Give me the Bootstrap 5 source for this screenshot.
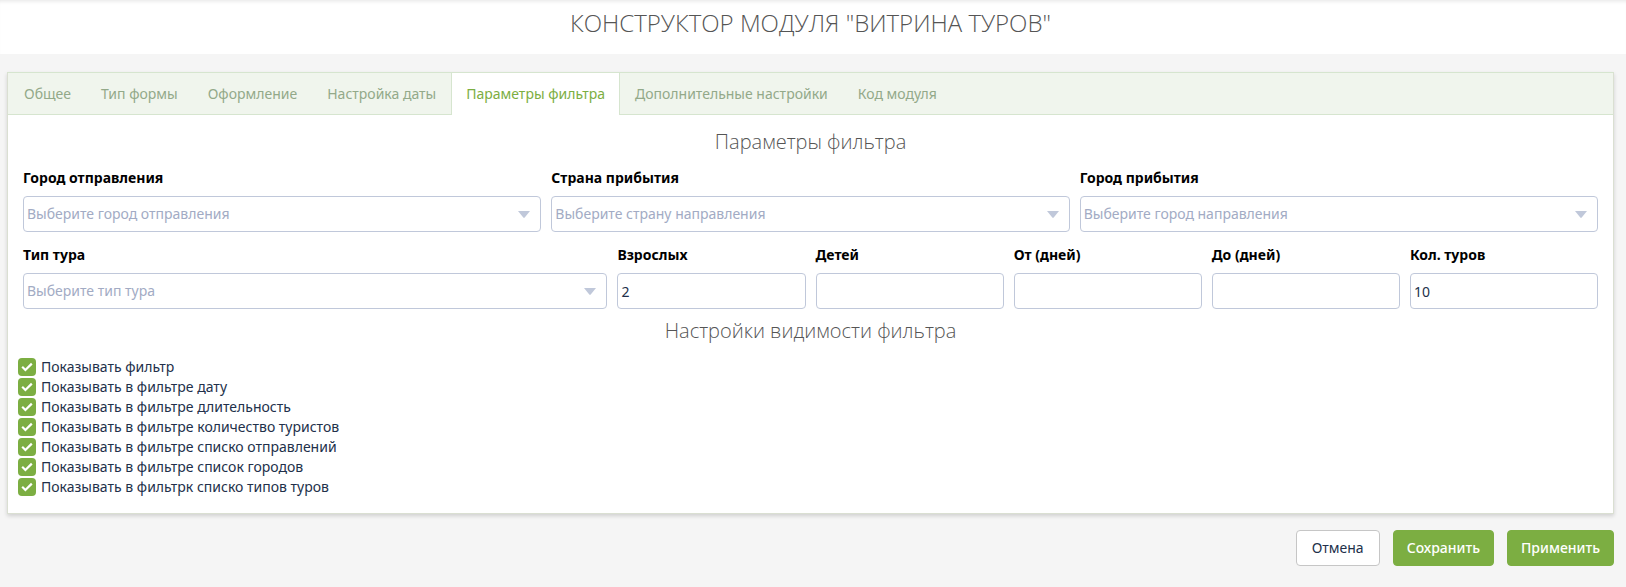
<!DOCTYPE html>
<html lang="ru">
<head>
<meta charset="utf-8">
<meta name="viewport" content="width=device-width, initial-scale=1">
<title>Конструктор модуля "Витрина туров"</title>
<link href="https://cdn.jsdelivr.net/npm/bootstrap@5.3.0/dist/css/bootstrap.min.css" rel="stylesheet">
<style>
  body { background: #f5f5f5; color: #22304a; font: 14px/20px "Noto Sans", "Open Sans", sans-serif; }
  .page-head { background: #fff; height: 54px; padding: 8px 12px 0 7px; box-shadow: inset 0 4px 4px -3px #e4e4e4; }
  .page-head h1 { font: 300 24px/30px "Open Sans", "Noto Sans", sans-serif; color: #555; }
  .page-main { padding: 18px 12px 0 7px; }
  .panel { background: #fff; border: 1px solid #dadfd2; border-top-color: #d6e5cf; box-shadow: 0 2px 4px rgba(0,0,0,.15); }
  .panel-tabs { background: #f0f5ed; border-bottom: 1px solid #d6e5cf; padding-left: 1px; }
  .panel-tabs .nav-link { color: #93a989; height: 41px; padding: 11px 14px; border: solid transparent; border-width: 0 1px; border-radius: 0; margin-bottom: -1px; }
  .panel-tabs .nav-link.active { color: #7cae42; background: #fff; height: 42px; border-color: #d6e5cf; }
  .panel-body { padding: 14px 10px 16px; }
  .panel-body h2 { font: 300 20px/26px "Open Sans", "Noto Sans", sans-serif; color: #555; margin: 0 0 13px; }
  .panel-body h2.lower { margin-top: 9px; }
  .fields { --bs-gutter-x: 10px; margin: 0; }
  .fields + .fields { margin-top: 13px; }
  .eighth { flex: 0 0 auto; width: 12.5%; }
  .three-eighths { flex: 0 0 auto; width: 37.5%; }
  .fields label { display: block; color: #000; font-weight: 700; margin-bottom: 8px; }
  .fields .form-control, .fields .form-select { height: 36px; padding: 0 3px; border: 1px solid #c0c8da; border-radius: 4px; font-size: 14px; line-height: 20px; color: #22304a; }
  .fields .form-select { color: #a2abc4; background-size: 12px 7px; background-position: right 10px center;
    background-image: url("data:image/svg+xml,%3Csvg xmlns='http://www.w3.org/2000/svg' viewBox='0 0 12 7'%3E%3Cpath d='M0 0h12L6.7 6.6a1 1 0 0 1-1.4 0z' fill='%23c0c8da'/%3E%3C/svg%3E"); }
  .visibility .form-check { display: flex; gap: 5px; min-height: 20px; margin: 0; padding: 0; }
  .visibility .form-check-input { flex: none; float: none; width: 18px; height: 18px; margin: 1px 0 0; border: 0; border-radius: 4px; }
  .visibility .form-check-input:checked { background-color: #7cae42; background-size: 18px 18px;
    background-image: url("data:image/svg+xml,%3Csvg xmlns='http://www.w3.org/2000/svg' viewBox='0 0 18 18'%3E%3Cpath d='M4.2 8.8l3.2 3.2 6.4-6.4' fill='none' stroke='%23fff' stroke-width='2.2'/%3E%3C/svg%3E"); }
  .actions { gap: 13px; }
  .actions .btn { font-size: 14px; line-height: 20px; height: 36px; padding: 7px 15px; border-radius: 4px; }
  .btn-plain { background: #fff; border-color: #c6c6c6; color: #22304a; }
  .actions .btn-green { background: #7cae42; border-color: #7cae42; color: #fff; font-weight: 500; padding: 7px 13px; }
</style>
</head>
<body>
<header class="page-head text-center"><h1 class="m-0">КОНСТРУКТОР МОДУЛЯ "ВИТРИНА ТУРОВ"</h1></header>
<main class="page-main">
  <section class="panel">
    <nav class="panel-tabs nav">
      <a class="nav-link" href="#">Общее</a>
      <a class="nav-link" href="#">Тип формы</a>
      <a class="nav-link" href="#">Оформление</a>
      <a class="nav-link" href="#">Настройка даты</a>
      <a class="nav-link active" aria-current="page" href="#">Параметры фильтра</a>
      <a class="nav-link" href="#">Дополнительные настройки</a>
      <a class="nav-link" href="#">Код модуля</a>
    </nav>
    <form class="panel-body" id="filter">
      <h2 class="text-center">Параметры фильтра</h2>
      <div class="fields row">
        <div class="col-4"><label for="from">Город отправления</label><select class="form-select" id="from"><option>Выберите город отправления</option></select></div>
        <div class="col-4"><label for="country">Страна прибытия</label><select class="form-select" id="country"><option>Выберите страну направления</option></select></div>
        <div class="col-4"><label for="to">Город прибытия</label><select class="form-select" id="to"><option>Выберите город направления</option></select></div>
      </div>
      <div class="fields row">
        <div class="three-eighths"><label for="type">Тип тура</label><select class="form-select" id="type"><option>Выберите тип тура</option></select></div>
        <div class="eighth"><label for="adults">Взрослых</label><input class="form-control" id="adults" value="2"></div>
        <div class="eighth"><label for="kids">Детей</label><input class="form-control" id="kids"></div>
        <div class="eighth"><label for="dmin">От (дней)</label><input class="form-control" id="dmin"></div>
        <div class="eighth"><label for="dmax">До (дней)</label><input class="form-control" id="dmax"></div>
        <div class="eighth"><label for="count">Кол. туров</label><input class="form-control" id="count" value="10"></div>
      </div>
      <h2 class="lower text-center">Настройки видимости фильтра</h2>
      <div class="visibility">
        <div class="form-check"><input class="form-check-input" type="checkbox" id="v1" checked><label for="v1">Показывать фильтр</label></div>
        <div class="form-check"><input class="form-check-input" type="checkbox" id="v2" checked><label for="v2">Показывать в фильтре дату</label></div>
        <div class="form-check"><input class="form-check-input" type="checkbox" id="v3" checked><label for="v3">Показывать в фильтре длительность</label></div>
        <div class="form-check"><input class="form-check-input" type="checkbox" id="v4" checked><label for="v4">Показывать в фильтре количество туристов</label></div>
        <div class="form-check"><input class="form-check-input" type="checkbox" id="v5" checked><label for="v5">Показывать в фильтре списко отправлений</label></div>
        <div class="form-check"><input class="form-check-input" type="checkbox" id="v6" checked><label for="v6">Показывать в фильтре список городов</label></div>
        <div class="form-check"><input class="form-check-input" type="checkbox" id="v7" checked><label for="v7">Показывать в фильтрк списко типов туров</label></div>
      </div>
    </form>
  </section>
  <div class="actions d-flex justify-content-end mt-3 pb-3">
    <button class="btn btn-plain" type="button">Отмена</button>
    <button class="btn btn-green" type="submit" form="filter">Сохранить</button>
    <button class="btn btn-green" type="button">Применить</button>
  </div>
</main>
<script src="https://cdn.jsdelivr.net/npm/bootstrap@5.3.0/dist/js/bootstrap.bundle.min.js"></script>
</body>
</html>
